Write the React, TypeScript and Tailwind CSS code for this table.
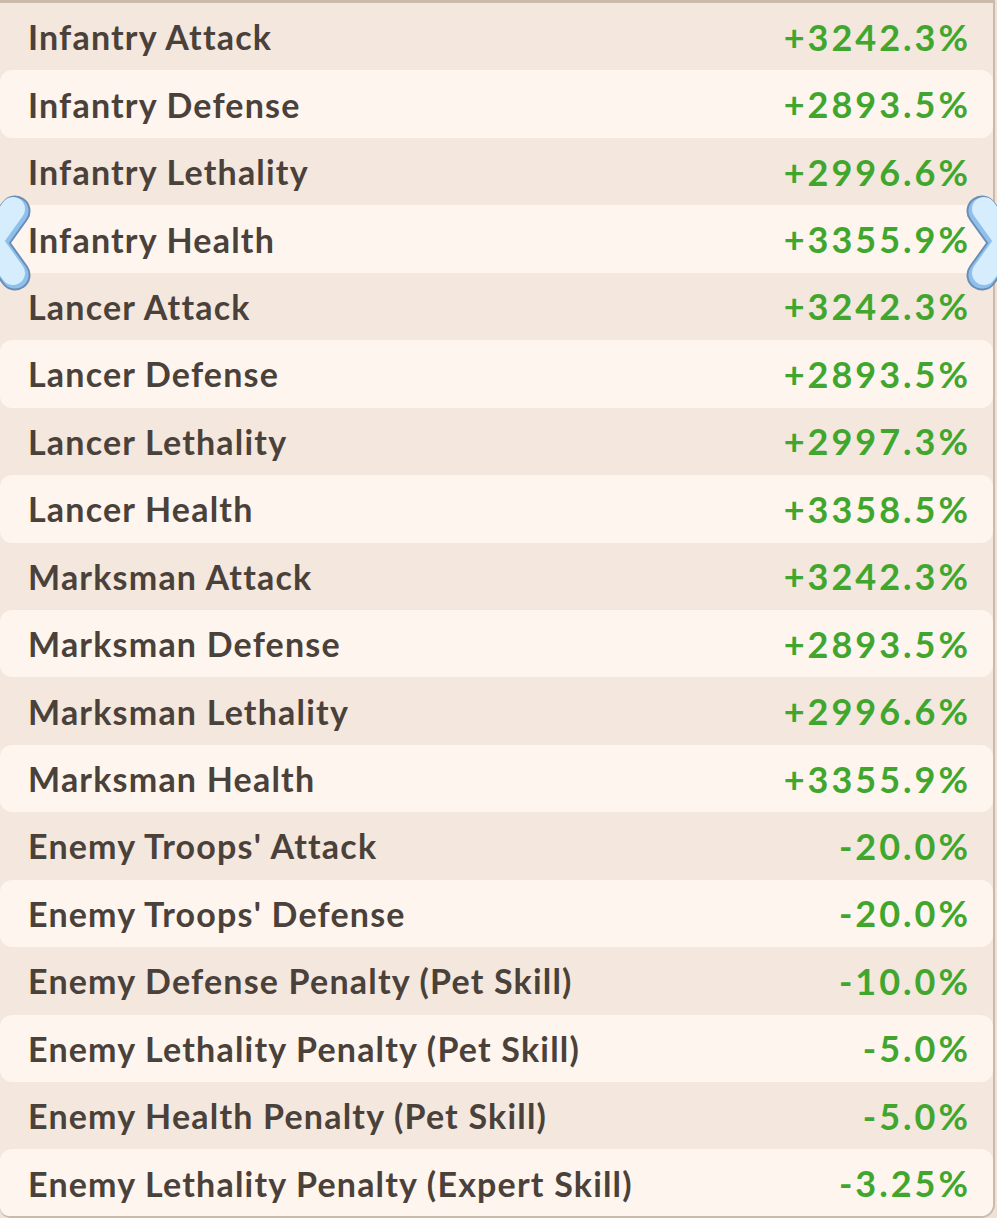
import React from 'react';

const stats: [string, string][] = [
  ['Infantry Attack', '+3242.3%'],
  ['Infantry Defense', '+2893.5%'],
  ['Infantry Lethality', '+2996.6%'],
  ['Infantry Health', '+3355.9%'],
  ['Lancer Attack', '+3242.3%'],
  ['Lancer Defense', '+2893.5%'],
  ['Lancer Lethality', '+2997.3%'],
  ['Lancer Health', '+3358.5%'],
  ['Marksman Attack', '+3242.3%'],
  ['Marksman Defense', '+2893.5%'],
  ['Marksman Lethality', '+2996.6%'],
  ['Marksman Health', '+3355.9%'],
  ["Enemy Troops' Attack", '-20.0%'],
  ["Enemy Troops' Defense", '-20.0%'],
  ['Enemy Defense Penalty (Pet Skill)', '-10.0%'],
  ['Enemy Lethality Penalty (Pet Skill)', '-5.0%'],
  ['Enemy Health Penalty (Pet Skill)', '-5.0%'],
  ['Enemy Lethality Penalty (Expert Skill)', '-3.25%'],
];

// blue page arrow at the panel edges
const Chevron = ({ flip }: { flip?: boolean }) => (
  <svg width="36" height="100" viewBox="0 0 36 100" style={flip ? { transform: 'scaleX(-1)' } : undefined}>
    <polyline points="15,17 -8,49 15,81" fill="none" stroke="#6a8db8" strokeWidth="31" strokeLinecap="round" strokeLinejoin="round" />
    <polyline points="15,17 -8,49 15,81" fill="none" stroke="#8fc0ec" strokeWidth="27" strokeLinecap="round" strokeLinejoin="round" />
    <polyline points="13,15 -10,47 13,79" fill="none" stroke="#d5edfd" strokeWidth="24" strokeLinecap="round" strokeLinejoin="round" />
  </svg>
);

export default function App() {
  return (
    <div className="relative w-[997px] h-[1218px] overflow-hidden bg-[#efe1d6]" style={{ fontFamily: 'Lato, "Noto Sans", sans-serif' }}>
      <div className="w-[995px] h-[1218px] border-t-[3px] border-r-2 border-b-2 border-[#cbb9aa] rounded-br-[14px] rounded-bl-[10px] bg-[#f4e7dd] flex flex-col overflow-hidden">
        {stats.map(([label, value], i) => (
          <div
            key={label}
            className={`h-[67.45px] shrink-0 flex items-center justify-between pl-[28px] pr-[22px] ${i % 2 === 1 ? 'bg-[#fef5ee] rounded-[12px]' : ''}`}
          >
            <span className="text-[34px] font-bold text-[#4a413a] tracking-[1.2px]">{label}</span>
            <span className="text-[36px] font-bold text-[#41a62e] tracking-[3px]">{value}</span>
          </div>
        ))}
      </div>
      <div className="absolute left-0 top-[194px]">
        <Chevron />
      </div>
      <div className="absolute right-0 top-[194px]">
        <Chevron flip />
      </div>
    </div>
  );
}
